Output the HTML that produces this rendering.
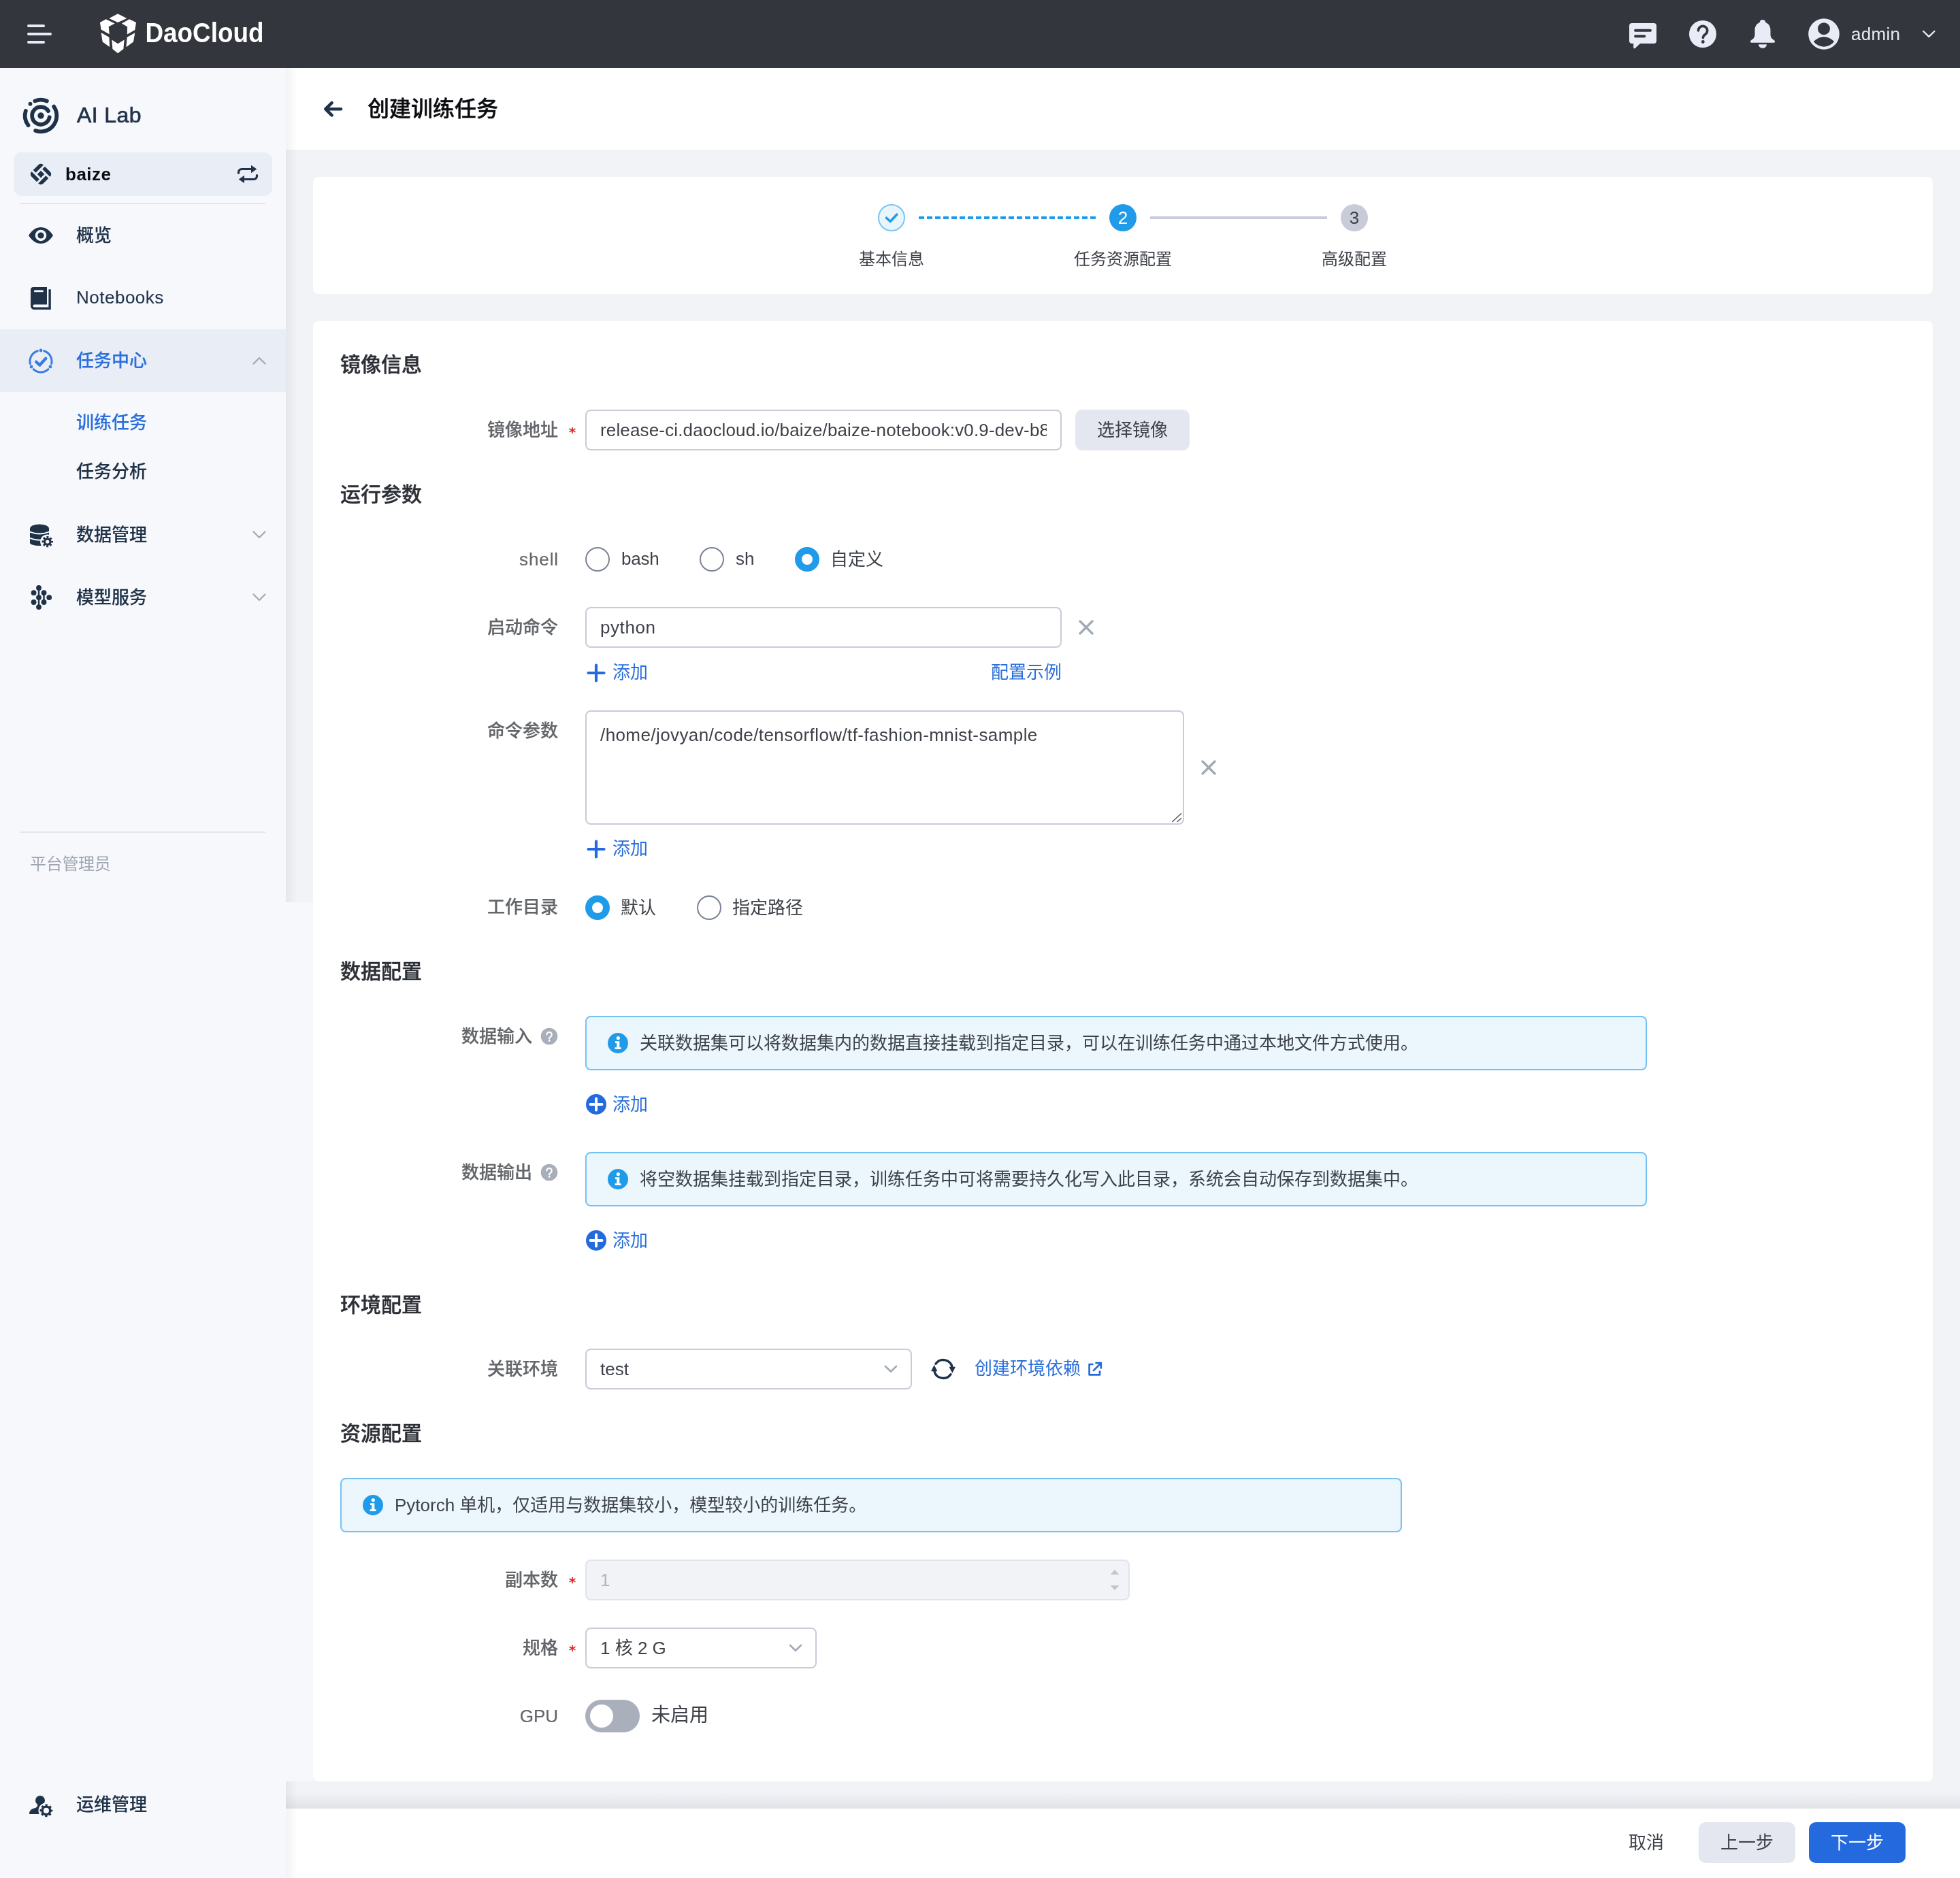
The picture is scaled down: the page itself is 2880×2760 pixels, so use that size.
<!DOCTYPE html>
<html lang="zh-CN">
<head>
<meta charset="utf-8">
<title>创建训练任务</title>
<style>
*{box-sizing:border-box;margin:0;padding:0}
html,body{width:2880px;height:2760px;overflow:hidden}
body{position:relative;background:#f2f3f7;font-family:"Liberation Sans","Noto Sans CJK SC",sans-serif;font-size:26px;color:#3d4148;-webkit-font-smoothing:antialiased}
#root{position:absolute;left:0;top:0;width:2880px;height:2760px;will-change:transform}
.abs{position:absolute}
svg{display:block;position:absolute}
/* topbar */
#topbar{position:absolute;left:0;top:0;width:2880px;height:100px;background:#33363d}
/* sidebar */
#sidebar{position:absolute;left:0;top:100px;width:420px;height:2660px;background:#f7f8fc}
#sidefill{position:absolute;left:420px;top:1326px;width:40px;height:1292px;background:#f7f8fc}
.mi{position:absolute;left:0;width:420px;height:92px;line-height:92px;font-size:26px;font-weight:500;color:#1f3248;-webkit-text-stroke:0.15px}
.mi span{position:absolute;left:112px;top:0;white-space:nowrap}
.mi.act{background:#e9edf6;color:#2a6fdb}
.smi{position:absolute;left:112px;height:72px;line-height:72px;font-size:26px;font-weight:500;color:#1f3248;white-space:nowrap;-webkit-text-stroke:0.15px}
/* header */
#phead{position:absolute;left:420px;top:100px;width:2460px;height:120px;background:#fff}
.card{position:absolute;left:460px;width:2380px;background:#fff;border-radius:8px}
.st{position:absolute;margin-top:1px;left:500px;font-size:30px;font-weight:500;-webkit-text-stroke:0.4px;color:#2c2f35;line-height:40px;white-space:nowrap}
.lb{position:absolute;margin-top:1px;right:2060px;font-size:26px;font-weight:500;color:#626569;line-height:40px;white-space:nowrap;text-align:right;-webkit-text-stroke:0.2px}
.req{position:absolute;left:834px;width:14px;text-align:center;color:#e3211f;font-family:"DejaVu Sans",sans-serif;font-size:20px;line-height:40px;font-weight:700}
.inp{position:absolute;left:860px;height:60px;border:2px solid #c8ccd8;border-radius:8px;background:#fff;line-height:56px;padding:0 20px;font-size:26px;color:#3d4148;white-space:nowrap;overflow:hidden}
.tx{position:absolute;white-space:nowrap;line-height:40px;font-size:26px;color:#3d4148}
.lnk{color:#2a6fdb}
.radio{position:absolute;width:36px;height:36px;border-radius:50%;border:2px solid #7a8394;background:#fff}
.radio.on{border:10px solid #1f9bea;background:#fff}
.alert{position:absolute;height:80px;border:2px solid #74c2f1;border-radius:8px;background:#ecf6fd;line-height:76px;font-size:26px;color:#3d4148;white-space:nowrap}
.stl{top:101px;width:300px;text-align:center;font-size:24px;line-height:40px;color:#3d4148;white-space:nowrap}
.btn{height:60px;line-height:60px;border-radius:10px;background:#e4e7ef;color:#3d4148;text-align:center;font-size:26px;white-space:nowrap}
#footer{position:absolute;left:420px;top:2658px;width:2460px;height:102px;background:#fff}
</style>
</head>
<body>
<div id="root">
<div id="topbar">
<svg style="left:40px;top:36px" width="40" height="28" viewBox="0 0 40 28"><g stroke="#e9ecf6" stroke-width="4" stroke-linecap="round"><path d="M2 2H24M2 14H34M2 26H24"/></g></svg>
<svg style="left:140px;top:14px" width="260" height="72" viewBox="140 14 260 72">
<g fill="#fff">
<polygon points="173.1,20.3 186.4,26.9 173.1,32.9 160.3,26.9"/>
<polygon points="155.7,28.3 168.6,34.6 159.7,39.3 160.7,50.3 148.6,43.6 146.9,32.9"/>
<polygon points="190,28.3 200,32.9 198.3,44 186.9,50.4 187.1,39.3 178.9,34.6"/>
<polygon points="148.6,47.9 160.4,54.7 161.1,68.9 150.7,61.4"/>
<polygon points="198.3,48.3 196,61.4 185.4,69.3 186.7,54.7"/>
<polygon points="164.3,58.6 173.1,64.3 182.6,58.6 181.4,72.1 173.1,78.3 165.4,72.1"/>
</g>
<text x="213.500" y="62.200" font-family="Liberation Sans, sans-serif" font-weight="700" font-size="41" fill="#fff" textLength="174" lengthAdjust="spacingAndGlyphs">DaoCloud</text>
</svg>
<!-- chat -->
<svg style="left:2392px;top:32px" width="44" height="42" viewBox="0 0 44 42"><path fill="#e9ecf6" d="M6 2h32a4 4 0 0 1 4 4v22a4 4 0 0 1-4 4H18l-7.5 7a1.4 1.4 0 0 1-2.3-1V32H6a4 4 0 0 1-4-4V6a4 4 0 0 1 4-4z"/><path d="M11 12.800H33M11 21.300H24.300" stroke="#33363d" stroke-width="3.900" stroke-linecap="round"/></svg>
<!-- help -->
<svg style="left:2480px;top:28px" width="44" height="44" viewBox="0 0 44 44"><circle cx="22" cy="22" r="20" fill="#e9ecf6"/><path d="M15.500 17a6.600 6.600 0 1 1 10.500 5.300c-2.200 1.600-3.600 2.700-3.600 5.200" fill="none" stroke="#33363d" stroke-width="3.600" stroke-linecap="round"/><circle cx="22.300" cy="33.500" r="2.400" fill="#33363d"/></svg>
<!-- bell -->
<svg style="left:2568px;top:27px" width="44" height="46" viewBox="0 0 44 46"><path fill="#e9ecf6" d="M22 2c2.300 0 4.200 1.700 4.300 3.900c4.500 1.600 7.200 5.900 7.200 11.100v7c0 2.900 1.100 5 3.600 6.800l2.200 1.600a1.800 1.800 0 0 1-1 3.300H5.700a1.800 1.800 0 0 1-1-3.300l2.200-1.600c2.500-1.800 3.600-3.900 3.600-6.800v-7c0-5.200 2.700-9.500 7.200-11.100C17.800 3.700 19.700 2 22 2zM15.900 38.200h12.200a6.100 5.600 0 0 1-12.200 0z"/></svg>
<!-- avatar -->
<svg style="left:2656px;top:26px" width="48" height="48" viewBox="0 0 48 48"><circle cx="24" cy="24" r="22.800" fill="#e9ecf6"/><circle cx="24" cy="16.200" r="8.950" fill="#33363d"/><path d="M8.850 34.900Q24 20.900 39.150 34.900A18.650 18.650 0 0 1 8.850 34.900Z" fill="#33363d"/></svg>
<div class="abs" style="left:2720px;top:30px;line-height:40px;font-size:26px;color:#e9ecf6;letter-spacing:0.3px">admin</div>
<svg style="left:2822px;top:42px" width="24" height="16" viewBox="0 0 24 16"><path d="M4.200 4L12.300 11.800l8.100-7.800" fill="none" stroke="#e9ecf6" stroke-width="2.400" stroke-linecap="round" stroke-linejoin="round"/></svg>
</div>
<div id="sidebar">
<!-- AI Lab logo -->
<svg style="left:30px;top:40px" width="60" height="60" viewBox="-30 -30 60 60"><g fill="none" stroke="#1f3248" stroke-width="5.800" stroke-linecap="round">
<path d="M-8.62 -21.65A23.3 23.3 0 0 1 8.88 -21.54"/>
<path d="M19.11 -13.33A23.3 23.3 0 0 1 -7.85 21.94"/>
<path d="M-18.56 14.09A23.3 23.3 0 0 1 -22.21 -7.05"/>
<path d="M10.94 -6.84A12.9 12.9 0 1 0 12.70 2.24"/>
</g><circle cx="-15.53" cy="-17.37" r="2.900" fill="#1f3248"/><circle cx="0" cy="0" r="4.700" fill="#1f3248"/></svg>
<div class="abs" style="left:113px;top:44px;line-height:50px;font-size:32px;color:#1f3248;letter-spacing:0.4px;-webkit-text-stroke:0.7px #1f3248;white-space:nowrap">AI Lab</div>
<!-- baize -->
<div class="abs" style="left:20px;top:124px;width:380px;height:64px;border-radius:12px;background:#e9edf6"></div>
<svg style="left:44px;top:140px" width="32" height="32" viewBox="-16 -16 32 32"><g transform="rotate(45)" fill="#1f3248"><rect x="-3.7" y="-3.7" width="7.4" height="7.4"/><path transform="rotate(0)" d="M-7.199999999999999 -12.2H-6.799999999999999V3.7H-12.2V-7.199999999999999A5.0 5.0 0 0 1 -7.199999999999999 -12.2Z"/><path transform="rotate(90)" d="M-7.199999999999999 -12.2H-6.799999999999999V3.7H-12.2V-7.199999999999999A5.0 5.0 0 0 1 -7.199999999999999 -12.2Z"/><path transform="rotate(180)" d="M-7.199999999999999 -12.2H-6.799999999999999V3.7H-12.2V-7.199999999999999A5.0 5.0 0 0 1 -7.199999999999999 -12.2Z"/><path transform="rotate(270)" d="M-7.199999999999999 -12.2H-6.799999999999999V3.7H-12.2V-7.199999999999999A5.0 5.0 0 0 1 -7.199999999999999 -12.2Z"/></g></svg>
<div class="abs" style="left:96px;top:136px;line-height:40px;font-size:26px;font-weight:700;color:#0b0c0f;letter-spacing:0.5px">baize</div>
<svg style="left:348px;top:142px" width="32" height="28" viewBox="0 0 32 28"><g fill="none" stroke="#1f3248" stroke-width="3.200" stroke-linecap="round" stroke-linejoin="round"><path d="M2.500 12.500v-1.500a4.500 4.500 0 0 1 4.500-4.500h18"/><path d="M29.500 15.500v1.500a4.500 4.500 0 0 1-4.500 4.500h-18"/></g><path fill="#1f3248" d="M21 0.800l8.300 5.700-8.300 5.700zM11 15.800l-8.300 5.700 8.300 5.700z"/></svg>
<div class="abs" style="left:30px;top:198px;width:360px;height:2px;background:#e3e6ef"></div>
<!-- menu -->
<div class="mi" style="top:200px"><svg style="left:42px;top:34px" width="36" height="24" viewBox="0 0 36 24"><path fill="#1f3248" d="M0 12C5.500 3.500 11.500 0 18 0s12.500 3.500 18 12c-5.500 8.500-11.500 12-18 12S5.500 20.500 0 12z"/><circle cx="18" cy="12" r="8.300" fill="#f7f8fc"/><circle cx="18" cy="12" r="4.600" fill="#1f3248"/></svg><span>概览</span></div>
<div class="mi" style="top:292px"><svg style="left:45px;top:30px" width="30" height="33" viewBox="0 0 30 33"><path fill="#1f3248" d="M4 0h20v25.500H5.500a2 2 0 0 0 0 4H26.400V3.300h3.400V33H5.200A5.200 5.200 0 0 1 0 27.800V4a4 4 0 0 1 4-4z"/><rect x="5.200" y="4.400" width="13.400" height="2.800" fill="#f7f8fc"/></svg><span style="letter-spacing:0.5px;top:-1px">Notebooks</span></div>
<div class="mi act" style="top:384px"><svg style="left:40px;top:27px" width="40" height="40" viewBox="-20 -20 40 40"><g fill="none" stroke="#3a7de0" stroke-width="3" stroke-linecap="round"><path d="M4.700 -15.300A16 16 0 0 1 15.600 3.600"/><path d="M10.900 11.700A16 16 0 0 1 -10.900 11.700"/><path d="M-15.600 3.600A16 16 0 0 1 -4.700 -15.300"/><path d="M-6.800 0.800L-1.600 5.500L7.300 -4.200" stroke-width="4.400" stroke-linejoin="round"/></g><g fill="#3a7de0"><circle cx="0" cy="-16" r="2.400"/><circle cx="13.900" cy="8" r="2.400"/><circle cx="-13.900" cy="8" r="2.400"/></g></svg><span>任务中心</span>
<svg style="left:371px;top:40px" width="20" height="12" viewBox="0 0 20 12"><path d="M1.500 10.500L10 2l8.500 8.500" fill="none" stroke="#a3aab6" stroke-width="2.300" stroke-linecap="round" stroke-linejoin="round"/></svg></div>
<div class="smi" style="top:485px;color:#2a6fdb">训练任务</div>
<div class="smi" style="top:557px">任务分析</div>
<div class="mi" style="top:640px"><svg style="left:42px;top:29px" width="40" height="36" viewBox="42 769 40 36"><path fill="#1f3248" d="M44 777a14 6.600 0 0 1 28 0V798c0 2.300-6.300 4-14 4s-14-1.700-14-4z"/><g fill="none" stroke="#f7f8fc" stroke-width="2.100"><path d="M43 781.400Q58 787.600 73 781.400"/><path d="M43 790.600Q58 796.800 73 790.600"/></g><circle cx="69.700" cy="796.100" r="10.600" fill="#f7f8fc"/><circle cx="69.700" cy="796.100" r="6.700" fill="none" stroke="#1f3248" stroke-width="3" stroke-dasharray="2.750 2.510" stroke-dashoffset="1.370"/><circle cx="69.700" cy="796.100" r="4.300" fill="none" stroke="#1f3248" stroke-width="3.200"/></svg><span>数据管理</span>
<svg style="left:371px;top:40px" width="20" height="12" viewBox="0 0 20 12"><path d="M1.500 1.500L10 10l8.500-8.500" fill="none" stroke="#a3aab6" stroke-width="2.300" stroke-linecap="round" stroke-linejoin="round"/></svg></div>
<div class="mi" style="top:732px"><svg style="left:42px;top:25px" width="36" height="40" viewBox="42 857 36 40"><g fill="#1f3248"><circle cx="49.600" cy="871.200" r="3.900"/><circle cx="49.600" cy="885" r="3.900"/><circle cx="57" cy="864" r="3.900"/><circle cx="57" cy="878.100" r="3.900"/><circle cx="57" cy="892.100" r="3.900"/><circle cx="64.500" cy="871.200" r="3.900"/><circle cx="64.500" cy="885" r="3.900"/><circle cx="72.200" cy="878.100" r="3.900"/><rect x="55.800" y="864" width="2.400" height="28"/><rect x="63.300" y="871" width="2.400" height="14"/></g></svg><span>模型服务</span>
<svg style="left:371px;top:40px" width="20" height="12" viewBox="0 0 20 12"><path d="M1.500 1.500L10 10l8.500-8.500" fill="none" stroke="#a3aab6" stroke-width="2.300" stroke-linecap="round" stroke-linejoin="round"/></svg></div>
<div class="abs" style="left:30px;top:1122px;width:360px;height:2px;background:#e3e6ef"></div>
<div class="abs" style="left:44px;top:1150px;line-height:40px;font-size:24px;color:#9fa6b2;white-space:nowrap;letter-spacing:-0.3px">平台管理员</div>
<div class="mi" style="top:2506px"><svg style="left:40px;top:28px" width="44" height="44" viewBox="40 2634 44 44"><g fill="#1f3248"><circle cx="59" cy="2646" r="7"/><path d="M43 2666C43 2660 47 2658.500 51 2657.300C54 2656.300 55.300 2655 55.300 2651H62.700C62.700 2655 64 2656 67 2657V2666Z"/></g><circle cx="67.900" cy="2660.900" r="11.400" fill="#f7f8fc"/><g fill="none" stroke="#1f3248"><circle cx="67.900" cy="2660.900" r="5.800" stroke-width="3.400"/><circle cx="67.900" cy="2660.900" r="8.100" stroke-width="2.600" stroke-dasharray="3.300 3.060" stroke-dashoffset="1.650"/></g></svg><span>运维管理</span></div>
</div>
<div id="sidefill"></div>
<div id="phead">
<svg style="left:54px;top:46px" width="32" height="28" viewBox="0 0 32 28"><path d="M27 14.250H4.500M13.600 5.100L4.400 14.250L13.600 23.400" fill="none" stroke="#1f3248" stroke-width="4.600" stroke-linecap="round" stroke-linejoin="round"/></svg>
<div class="abs" style="left:120px;top:35px;line-height:50px;font-size:32px;font-weight:500;color:#0b0c0f;white-space:nowrap;-webkit-text-stroke:0.4px">创建训练任务</div>
</div>
<div class="card" id="card1" style="top:260px;height:172px">
<div class="abs" style="left:830px;top:40px;width:40px;height:40px;border-radius:50%;border:2px solid #7cc4f2;background:#e9f5fd"></div>
<svg style="left:838px;top:51px" width="24" height="18" viewBox="0 0 24 18"><path d="M4.500 9.200l5.700 5.300L19.800 4.200" fill="none" stroke="#1f9bea" stroke-width="3.500" stroke-linecap="round" stroke-linejoin="round"/></svg>
<svg style="left:890px;top:58px" width="260" height="4" viewBox="0 0 260 4"><path d="M0 2H260" stroke="#1f9bea" stroke-width="4" stroke-dasharray="8 4"/></svg>
<div class="abs" style="left:1170px;top:40px;width:40px;height:40px;border-radius:50%;background:#1f9bea;color:#fff;text-align:center;line-height:40px;font-size:26px">2</div>
<div class="abs" style="left:1230px;top:58px;width:260px;height:4px;background:#c8ccd8"></div>
<div class="abs" style="left:1510px;top:40px;width:40px;height:40px;border-radius:50%;background:#c8ccd8;color:#3d4148;text-align:center;line-height:40px;font-size:26px">3</div>
<div class="abs stl" style="left:700px">基本信息</div>
<div class="abs stl" style="left:1040px">任务资源配置</div>
<div class="abs stl" style="left:1380px">高级配置</div>
</div>
<div class="card" id="card2" style="top:472px;height:2146px"></div>
<div class="st" style="top:515px">镜像信息</div>
<div class="lb" style="top:611px;right:2060px">镜像地址</div>
<div class="req" style="top:615px">*</div>
<div class="inp" style="top:602px;width:700px"><span id="t_img" style="display:block;width:656px;overflow:hidden;letter-spacing:0.15px">release-ci.daocloud.io/baize/baize-notebook:v0.9-dev-b8</span></div>
<div class="abs btn" style="left:1580px;top:602px;width:168px">选择镜像</div>
<div class="st" style="top:706px">运行参数</div>
<div class="lb" style="top:801px;right:2060px;letter-spacing:0.9px;margin-right:-1px">shell</div>
<div class="radio" style="left:860px;top:804px"></div>
<div class="tx" style="left:913px;top:801px;letter-spacing:-0.2px">bash</div>
<div class="radio" style="left:1028px;top:804px"></div>
<div class="tx" style="left:1081px;top:801px;letter-spacing:0px">sh</div>
<div class="radio on" style="left:1168px;top:804px"></div>
<div class="tx" style="left:1220px;top:802px;">自定义</div>
<div class="lb" style="top:901px;right:2060px">启动命令</div>
<div class="inp" style="top:892px;width:700px"><span id="t_py" style="letter-spacing:0.57px">python</span></div>
<svg style="left:1584px;top:910px" width="24" height="24" viewBox="0 0 24 24"><path d="M3 3L21 21M21 3L3 21" stroke="#a3aab6" stroke-width="3.400" stroke-linecap="round"/></svg>
<svg style="left:862px;top:975px" width="28" height="28" viewBox="0 0 28 28"><path d="M14 2.500V25.500M2.500 14H25.500" stroke="#246ade" stroke-width="4.200" stroke-linecap="round"/></svg>
<div class="tx" style="left:900px;top:968px;color:#2a6fdb">添加</div>
<div class="tx" style="left:1456px;top:968px;color:#2a6fdb">配置示例</div>
<div class="lb" style="top:1053px;right:2060px">命令参数</div>
<div class="inp" style="top:1044px;width:880px;height:168px;line-height:40px;padding-top:14px"><span id="t_arg" style="letter-spacing:0.41px">/home/jovyan/code/tensorflow/tf-fashion-mnist-sample</span></div>
<svg style="left:1720px;top:1193px" width="18" height="18" viewBox="0 0 18 18"><path d="M2.800 14.500L15.500 2.800M10 14.500L15.500 9.700" stroke="#555" stroke-width="1.500" stroke-linecap="round"/></svg>
<svg style="left:1764px;top:1116px" width="24" height="24" viewBox="0 0 24 24"><path d="M3 3L21 21M21 3L3 21" stroke="#a3aab6" stroke-width="3.400" stroke-linecap="round"/></svg>
<svg style="left:862px;top:1234px" width="28" height="28" viewBox="0 0 28 28"><path d="M14 2.500V25.500M2.500 14H25.500" stroke="#246ade" stroke-width="4.200" stroke-linecap="round"/></svg>
<div class="tx" style="left:900px;top:1227px;color:#2a6fdb">添加</div>
<div class="lb" style="top:1312px;right:2060px">工作目录</div>
<div class="radio on" style="left:860px;top:1316px"></div>
<div class="tx" style="left:912px;top:1314px;">默认</div>
<div class="radio" style="left:1024px;top:1316px"></div>
<div class="tx" style="left:1076px;top:1314px;">指定路径</div>
<div class="st" style="top:1407px">数据配置</div>
<div class="lb" style="top:1502px;right:2098px">数据输入</div>
<svg style="left:794px;top:1510px" width="26" height="26" viewBox="-1 -1 26 26"><circle cx="12" cy="12" r="12.300" fill="#a8aeba"/><path d="M8.300 9.600a3.700 3.700 0 1 1 5.800 3c-1.300.9-2 1.500-2 3" fill="none" stroke="#fff" stroke-width="2.200" stroke-linecap="round"/><circle cx="12.100" cy="18.400" r="1.400" fill="#fff"/></svg>
<div class="alert" style="left:860px;top:1493px;width:1560px"><span style="position:absolute;left:78px">关联数据集可以将数据集内的数据直接挂载到指定目录，可以在训练任务中通过本地文件方式使用。</span></div>
<svg style="left:893px;top:1518px" width="30" height="30" viewBox="0 0 30 30"><circle cx="15" cy="15" r="15" fill="#1f9bea"/><circle cx="15.300" cy="7.600" r="2.600" fill="#fff"/><path d="M11 12.300h6.300v9h2.300v2.600h-9v-2.600h2.600v-6.400h-2.200z" fill="#fff"/></svg>
<svg style="left:861px;top:1608px" width="30" height="30" viewBox="0 0 30 30"><circle cx="15" cy="15" r="15" fill="#246ade"/><path d="M15 6.500V23.500M6.500 15H23.500" stroke="#fff" stroke-width="4" stroke-linecap="round"/></svg>
<div class="tx" style="left:900px;top:1603px;color:#2a6fdb">添加</div>
<div class="lb" style="top:1702px;right:2098px">数据输出</div>
<svg style="left:794px;top:1710px" width="26" height="26" viewBox="-1 -1 26 26"><circle cx="12" cy="12" r="12.300" fill="#a8aeba"/><path d="M8.300 9.600a3.700 3.700 0 1 1 5.800 3c-1.300.9-2 1.500-2 3" fill="none" stroke="#fff" stroke-width="2.200" stroke-linecap="round"/><circle cx="12.100" cy="18.400" r="1.400" fill="#fff"/></svg>
<div class="alert" style="left:860px;top:1693px;width:1560px"><span style="position:absolute;left:78px">将空数据集挂载到指定目录，训练任务中可将需要持久化写入此目录，系统会自动保存到数据集中。</span></div>
<svg style="left:893px;top:1718px" width="30" height="30" viewBox="0 0 30 30"><circle cx="15" cy="15" r="15" fill="#1f9bea"/><circle cx="15.300" cy="7.600" r="2.600" fill="#fff"/><path d="M11 12.300h6.300v9h2.300v2.600h-9v-2.600h2.600v-6.400h-2.200z" fill="#fff"/></svg>
<svg style="left:861px;top:1808px" width="30" height="30" viewBox="0 0 30 30"><circle cx="15" cy="15" r="15" fill="#246ade"/><path d="M15 6.500V23.500M6.500 15H23.500" stroke="#fff" stroke-width="4" stroke-linecap="round"/></svg>
<div class="tx" style="left:900px;top:1803px;color:#2a6fdb">添加</div>
<div class="st" style="top:1897px">环境配置</div>
<div class="lb" style="top:1991px;right:2060px">关联环境</div>
<div class="inp" style="top:1982px;width:480px">test</div>
<svg style="left:1298px;top:2005px" width="22" height="14" viewBox="0 0 22 14"><path d="M3 3L11 10.800l8-7.800" fill="none" stroke="#a3aab6" stroke-width="2.600" stroke-linecap="round" stroke-linejoin="round"/></svg>
<svg style="left:1365px;top:1991px" width="42" height="42" viewBox="-21 -21 42 42"><g fill="none" stroke="#1f3248" stroke-width="3.400" stroke-linecap="round"><path d="M-10.980 -7.690A13.400 13.400 0 0 1 13.100 -2.800"/><path d="M10.980 7.690A13.400 13.400 0 0 1 -13.100 2.800"/></g><path fill="#1f3248" d="M8.600 -3.200h9.400l-4.700 9.200zM-8.600 3.200h-9.400l4.700 -9.200z"/></svg>
<div class="tx" style="left:1432px;top:1991px;color:#2a6fdb">创建环境依赖</div>
<svg style="left:1597px;top:2000px" width="24" height="24" viewBox="0 0 24 24"><g fill="none" stroke="#246ade" stroke-width="2.700" stroke-linejoin="round"><path d="M9.500 5H3.600V20.400H19V14.500"/><path d="M10 14L20.500 3.500" stroke-linecap="round"/><path d="M13.500 3.200h7.300v7.300" stroke-linecap="round"/></g></svg>
<div class="st" style="top:2086px">资源配置</div>
<div class="alert" style="left:500px;top:2172px;width:1560px"><span style="position:absolute;left:78px">Pytorch 单机，仅适用与数据集较小，模型较小的训练任务。</span></div>
<svg style="left:533px;top:2197px" width="30" height="30" viewBox="0 0 30 30"><circle cx="15" cy="15" r="15" fill="#1f9bea"/><circle cx="15.300" cy="7.600" r="2.600" fill="#fff"/><path d="M11 12.300h6.300v9h2.300v2.600h-9v-2.600h2.600v-6.400h-2.200z" fill="#fff"/></svg>
<div class="lb" style="top:2301px;right:2060px">副本数</div>
<div class="req" style="top:2305px">*</div>
<div class="inp" style="top:2292px;width:800px;background:#f2f3f7;border-color:#e1e4ec;color:#b0b6c1">1</div>
<svg style="left:1630px;top:2305px" width="16" height="34" viewBox="0 0 16 34"><path fill="#c0c5cf" d="M8 2l6.500 7h-13zM8 32l6.500-7h-13z"/></svg>
<div class="lb" style="top:2401px;right:2060px">规格</div>
<div class="req" style="top:2405px">*</div>
<div class="inp" style="top:2392px;width:340px">1 核 2 G</div>
<svg style="left:1158px;top:2415px" width="22" height="14" viewBox="0 0 22 14"><path d="M3 3L11 10.800l8-7.800" fill="none" stroke="#a3aab6" stroke-width="2.600" stroke-linecap="round" stroke-linejoin="round"/></svg>
<div class="lb" style="top:2501px;right:2060px">GPU</div>
<div class="abs" style="left:860px;top:2498px;width:80px;height:48px;border-radius:24px;background:#a9afbb"></div><div class="abs" style="left:867px;top:2505px;width:34px;height:34px;border-radius:50%;background:#fff"></div>
<div class="tx" style="left:957px;top:2501px;font-size:28px">未启用</div>
<div class="abs" style="left:420px;top:2634px;width:2460px;height:24px;background:linear-gradient(to bottom,rgba(20,25,40,0),rgba(20,25,40,0.075))"></div>
<div id="footer">
<div class="abs" style="left:1973px;top:30px;line-height:40px;font-size:26px;color:#3d4148;white-space:nowrap">取消</div>
<div class="abs btn" style="left:2076px;top:20px;width:142px">上一步</div>
<div class="abs btn" style="left:2238px;top:20px;width:142px;background:#246ade;color:#fff">下一步</div>
</div>
<div class="abs" style="left:420px;top:100px;width:17px;height:1226px;background:linear-gradient(to right,rgba(0,0,0,0.048),rgba(0,0,0,0))"></div>
<div class="abs" style="left:420px;top:2618px;width:17px;height:142px;background:linear-gradient(to right,rgba(0,0,0,0.048),rgba(0,0,0,0))"></div>
</div>
</body>
</html>
